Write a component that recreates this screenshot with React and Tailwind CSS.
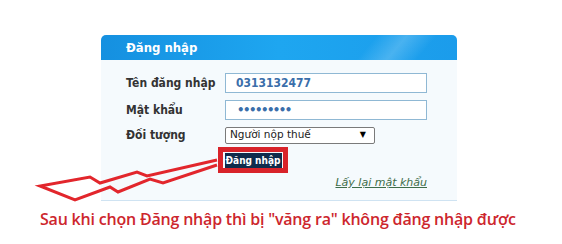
import React from 'react';

const labelCls = 'w-[99px] shrink-0 text-[12px] font-bold text-[#333] whitespace-nowrap';

const App = () => {
  return (
    <div className="relative w-[562px] h-[244px] bg-white overflow-hidden" style={{ fontFamily: '"DejaVu Sans Condensed", "Liberation Sans", sans-serif' }}>
      <div className="ml-[101px] pt-[35px] w-[356px]">
        {/* header */}
        <div className="relative h-[25px] rounded-t-[5px] bg-gradient-to-r from-[#1590e0] via-[#1ea6f0] to-[#1b9ceb] overflow-hidden flex items-center pl-[25px]">
          <div className="absolute right-[30px] top-0 h-full w-[60px] bg-gradient-to-r from-transparent via-white/20 to-transparent -skew-x-[40deg]" />
          <span className="relative text-white font-bold text-[13px]">Đăng nhập</span>
        </div>
        {/* body */}
        <div className="h-[141px] bg-[#f5fafd] border-b border-[#cfe3f2] pt-[13px] pl-[25px]">
          <div className="flex items-center h-[20px]">
            <span className={labelCls}>Tên đăng nhập</span>
            <div className="w-[202px] h-[20px] border border-[#8fb8d4] bg-white flex items-center pl-[10px] text-[12px] font-bold text-[#3a6eaa]">
              0313132477
            </div>
          </div>
          <div className="flex items-center h-[20px] mt-[7px]">
            <span className={labelCls}>Mật khẩu</span>
            <div className="w-[202px] h-[20px] border border-[#8fb8d4] bg-white flex items-center pl-[11px] text-[13px] font-bold text-[#3a6eaa] tracking-[-1.5px]">
              •••••••••
            </div>
          </div>
          <div className="flex items-center h-[16px] mt-[7px]">
            <span className={labelCls}>Đối tượng</span>
            <div className="w-[150px] h-[17px] border border-[#7a7a7a] rounded-[2px] bg-white flex items-center justify-between pl-[4px] pr-[8px] text-[11px] text-[#222]" style={{ fontFamily: '"DejaVu Sans", sans-serif' }}>
              <span className="text-[10.5px]">Người nộp thuế</span>
              <span className="text-[8px] text-black">▼</span>
            </div>
          </div>
          <div className="ml-[92px] mt-[4px] w-[70px] h-[26px] border-[5px] border-[#d8232a] flex items-center justify-center">
            <div className="w-[57px] h-[15px] bg-[#0f2c4c] text-white text-[10px] font-bold flex items-center justify-center whitespace-nowrap">
              Đăng nhập
            </div>
          </div>
          <div className="w-[301px] flex justify-end mt-[2px]">
            <span className="italic underline text-[11px] text-[#3e6d4a]" style={{ fontFamily: '"DejaVu Sans", sans-serif' }}>Lấy lại mật khẩu</span>
          </div>
        </div>
      </div>

      {/* arrow */}
      <svg className="absolute left-0 top-0 pointer-events-none" width="562" height="244">
        <polyline
          points="217,160 147,176 137,172 100,183 90,177 40,186 75,200 110,187 118,192 150,179 163,183 217,165"
          fill="none"
          stroke="#e2262c"
          strokeWidth="3"
          strokeLinejoin="miter"
        />
      </svg>

      <div className="absolute left-[40px] top-[207px] text-[16px] font-semibold text-[#cd262d] whitespace-nowrap tracking-[-0.2px]" style={{ fontFamily: '"Open Sans", sans-serif' }}>
        Sau khi chọn Đăng nhập thì bị "văng ra" không đăng nhập được
      </div>
    </div>
  );
};

export default App;
